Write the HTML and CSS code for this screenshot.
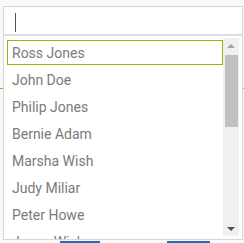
FILE: index.html
```html
<!DOCTYPE html>
<html>
<head>
<meta charset="utf-8">
<link rel="stylesheet" href="styles.css">
</head>
<body>
<div class="page">
  <div class="rule"></div>
  <div class="buttons">
    <span class="btn b1"></span>
    <span class="btn b2"></span>
  </div>
</div>
<div class="popup">
  <div class="search"><span class="caret"></span></div>
  <div class="listwrap">
    <ul class="list">
      <li class="item focused">Ross Jones</li>
      <li class="item">John Doe</li>
      <li class="item">Philip Jones</li>
      <li class="item">Bernie Adam</li>
      <li class="item">Marsha Wish</li>
      <li class="item">Judy Miliar</li>
      <li class="item">Peter Howe</li>
      <li class="item">Jenna Wish</li>
    </ul>
    <div class="scrollbar">
      <span class="arrow up"></span>
      <span class="thumb"></span>
      <span class="spacer"></span>
      <span class="arrow down"></span>
    </div>
  </div>
</div>
</body>
</html>
```

FILE: styles.css
```css
html, body {
  margin: 0;
  padding: 0;
}
body {
  width: 244px;
  height: 243px;
  overflow: hidden;
  background: #f2f2f2;
  position: relative;
  font-family: Roboto, "Liberation Sans", sans-serif;
}
.page {
  height: 243px;
  display: flex;
  flex-direction: column;
  background: #f9f9f9;
}
.rule {
  margin-top: 88px;
  height: 1px;
  background: #8ebc00;
}
.buttons {
  margin-top: auto;
  height: 2px;
  display: flex;
  padding-left: 60px;
  gap: 67px;
}
.btn {
  display: block;
  height: 2px;
  background: #1f6fb2;
}
.b1 { width: 40px; }
.b2 { width: 43px; }

.popup {
  position: absolute;
  left: 3px;
  top: 6px;
  width: 240px;
  height: 234px;
  box-sizing: border-box;
  border: 1px solid #d6d6d6;
  background: #fff;
  display: flex;
  flex-direction: column;
}
.search {
  height: 27px;
  border-bottom: 2px solid #dedede;
  position: relative;
}
.caret {
  position: absolute;
  left: 11px;
  top: 6px;
  width: 1px;
  height: 19px;
  background: #555;
}
.listwrap {
  flex: 1;
  display: flex;
  min-height: 0;
}
.list {
  flex: 1;
  margin: 0;
  padding: 4px 0 0 3px;
  list-style: none;
  overflow: hidden;
  display: flex;
  flex-direction: column;
  gap: 2px;
}
.item {
  flex: none;
  height: 25px;
  box-sizing: border-box;
  border: 1px solid transparent;
  padding: 1px 0 0 4px;
  line-height: 23px;
  font-size: 14px;
  color: #7a7a7a;
}
.item.focused {
  border-color: #8ebc00;
}
.scrollbar {
  width: 16px;
  margin: 2px 3px 3px 0;
  background: #f0f0f0;
  display: flex;
  flex-direction: column;
  align-items: center;
}
.arrow {
  width: 0;
  height: 0;
  border-left: 4px solid transparent;
  border-right: 4px solid transparent;
}
.up {
  margin-top: 6px;
  border-bottom: 4px solid #a3a3a3;
}
.down {
  margin-bottom: 5px;
  border-top: 4px solid #505050;
}
.thumb {
  margin-top: 7px;
  width: 13px;
  height: 72px;
  background: #c1c1c1;
  align-self: flex-start;
  margin-left: 2px;
}
.spacer {
  flex: 1;
}
```
